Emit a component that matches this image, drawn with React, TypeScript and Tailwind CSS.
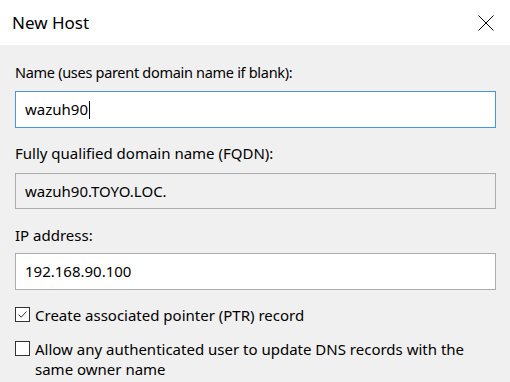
const font = { fontFamily: '"Noto Sans", "Open Sans", sans-serif' };

const Check = ({ checked }: { checked: boolean }) => (
  <div className="w-[15px] h-[15px] shrink-0 border border-[#333333] bg-white flex items-center justify-center">
    {checked && (
      <svg width="11" height="11" viewBox="0 0 11 11">
        <path d="M1.5 5.5 L4.2 8.2 L9.5 2.5" fill="none" stroke="#333333" strokeWidth="1" />
      </svg>
    )}
  </div>
);

export default function App() {
  return (
    <div className="w-[510px] h-[382px] bg-[#f0f0f0] text-black overflow-hidden" style={font}>
      <div className="h-[45px] bg-white flex items-center justify-between pl-[12px] pr-[16px]">
        <span className="text-[17px] leading-none">New Host</span>
        <svg width="16" height="16" viewBox="0 0 16 16">
          <path d="M0.5 0.5 L15.5 15.5 M15.5 0.5 L0.5 15.5" stroke="#000" strokeWidth="1" />
        </svg>
      </div>

      <div className="px-[15px]">
        <div className="pt-[17px] text-[14.5px] leading-[20px] tracking-[-0.3px]">Name (uses parent domain name if blank):</div>
        <div className="mt-[9px] h-[37px] w-[481px] bg-white border border-[#4a94e0] flex items-center pl-[9px] text-[15px]">
          wazuh90<span className="inline-block w-px h-[18px] bg-black ml-px" />
        </div>

        <div className="mt-[15px] text-[15px] leading-[20px]">Fully qualified domain name (FQDN):</div>
        <div className="mt-[10px] h-[36px] w-[481px] bg-[#f0f0f0] border border-[#acacac] flex items-center pl-[9px] text-[15px]">
          wazuh90.TOYO.LOC.
        </div>

        <div className="mt-[16px] text-[15px] leading-[20px]">IP address:</div>
        <div className="mt-[8px] h-[37px] w-[481px] bg-white border border-[#acacac] flex items-center pl-[9px] text-[15px]">
          192.168.90.100
        </div>

        <div className="mt-[15px] flex items-start gap-[5px] text-[15px] leading-[20px]">
          <div className="pt-[2px]">
            <Check checked />
          </div>
          <span>Create associated pointer (PTR) record</span>
        </div>
        <div className="mt-[14px] flex items-start gap-[5px] text-[15px] leading-[20px]">
          <div className="pt-[2px]">
            <Check checked={false} />
          </div>
          <span className="w-[440px]">Allow any authenticated user to update DNS records with the same owner name</span>
        </div>
      </div>
    </div>
  );
}
